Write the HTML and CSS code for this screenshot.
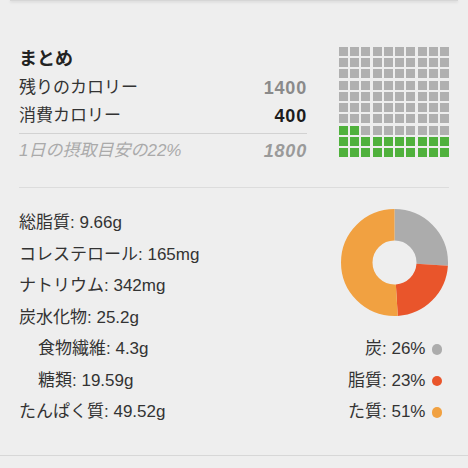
FILE: index.html
```html
<!DOCTYPE html>
<html lang="ja">
<head>
    <meta charset="UTF-8">
    <meta name="viewport" content="width=device-width, initial-scale=1.0">
    <title>まとめ</title>
    <link rel="stylesheet" href="styles.css">
</head>
<body>
    <div class="card-edge"></div>

    <main class="panel">
        <section class="summary">
            <div class="summary-list">
                <h2 class="summary-title">まとめ</h2>
                <div class="summary-row">
                    <span>残りのカロリー</span>
                    <span class="value value-muted">1400</span>
                </div>
                <div class="summary-row summary-row-split">
                    <span>消費カロリー</span>
                    <span class="value value-strong">400</span>
                </div>
                <div class="summary-row summary-row-note">
                    <span>1日の摂取目安の22%</span>
                    <span class="value">1800</span>
                </div>
            </div>
            <div class="waffle" id="waffle"></div>
        </section>

        <section class="nutrients">
            <ul class="nutrient-list">
                <li>総脂質: 9.66g</li>
                <li>コレステロール: 165mg</li>
                <li>ナトリウム: 342mg</li>
                <li>炭水化物: 25.2g</li>
                <li class="sub">食物繊維: 4.3g</li>
                <li class="sub">糖類: 19.59g</li>
                <li>たんぱく質: 49.52g</li>
            </ul>

            <div class="macros">
                <svg class="donut" width="107" height="107" viewBox="0 0 107 107">
                    <g transform="rotate(-90 53.5 53.5)" fill="none" stroke-width="31.5">
                        <circle cx="53.5" cy="53.5" r="37.75" pathLength="100" stroke="#acacac" stroke-dasharray="26 74" stroke-dashoffset="0"/>
                        <circle cx="53.5" cy="53.5" r="37.75" pathLength="100" stroke="#e9552b" stroke-dasharray="23 77" stroke-dashoffset="-26"/>
                        <circle cx="53.5" cy="53.5" r="37.75" pathLength="100" stroke="#f1a141" stroke-dasharray="51 49" stroke-dashoffset="-49"/>
                    </g>
                </svg>
                <ul class="legend">
                    <li>炭: 26%<span class="dot dot-carb"></span></li>
                    <li>脂質: 23%<span class="dot dot-fat"></span></li>
                    <li>た質: 51%<span class="dot dot-protein"></span></li>
                </ul>
            </div>
        </section>
    </main>

    <script>
        // 10x10 のマス目、下から左→右へ 22 マスを塗る
        const filled = 22;
        const waffle = document.getElementById('waffle');
        for (let r = 0; r < 10; r++) {
            for (let c = 0; c < 10; c++) {
                const cell = document.createElement('i');
                if ((9 - r) * 10 + c < filled) {
                    cell.className = 'on';
                }
                waffle.appendChild(cell);
            }
        }
    </script>
</body>
</html>
```

FILE: styles.css
```css
/* 全体 */
body {
    margin: 0;
    background-color: #eeeeee;
    color: #333;
    font-family: "Liberation Sans", "Noto Sans CJK JP", sans-serif;
    font-size: 17px;
}

/* 上のカードの下端 */
.card-edge {
    height: 1px;
    margin: 0 10px;
    background-color: #d6d6d6;
    box-shadow: 0 1px 3px rgba(0, 0, 0, 0.18);
}

.panel {
    margin-top: 43px;
    border-bottom: 1px solid #d7d7d7;
}

/* まとめ */
.summary {
    display: flex;
    justify-content: space-between;
    margin: 0 19px;
    padding-bottom: 22px;
    border-bottom: 1px solid #dcdcdc;
}

.summary-list {
    flex: 0 0 288px;
}

.summary-title {
    margin: 0;
    font-size: 18px;
    font-weight: bold;
    line-height: 30px;
    color: #222;
}

.summary-row {
    display: flex;
    justify-content: space-between;
    line-height: 28px;
}

.summary-row-split {
    padding-bottom: 3px;
    border-bottom: 1px solid #d2d2d2;
}

.summary-row-note {
    padding-top: 3px;
    font-style: italic;
    color: #aaa;
}

.value {
    font-size: 18px;
    font-weight: 600;
    letter-spacing: 0.8px;
}

.value-muted {
    color: #8a8a8a;
}

.value-strong {
    color: #1c1c1c;
    font-weight: bold;
}

.summary-row-note .value {
    color: #9a9a9a;
}

.waffle {
    display: grid;
    grid-template-columns: repeat(10, 1fr);
    gap: 2.2px;
    width: 110px;
    height: 110px;
    margin-top: 3px;
}

.waffle i {
    background-color: #b0b0b0;
}

.waffle i.on {
    background-color: #4fb13c;
}

/* 栄養素 */
.nutrients {
    display: flex;
    justify-content: space-between;
    padding: 19px 20px 27px 19px;
}

.nutrient-list,
.legend {
    list-style: none;
    margin: 0;
    padding: 0;
}

.nutrient-list li,
.legend li {
    line-height: 31.5px;
}

.nutrient-list .sub {
    padding-left: 19px;
}

.macros {
    display: flex;
    flex-direction: column;
    align-items: flex-end;
}

.donut {
    display: block;
    margin-top: 2px;
}

.legend {
    margin-top: 17px;
    padding-right: 6px;
    text-align: right;
}

.dot {
    display: inline-block;
    width: 10.5px;
    height: 10.5px;
    margin-left: 6px;
    border-radius: 50%;
    vertical-align: -0.5px;
}

.dot-carb {
    background-color: #acacac;
}

.dot-fat {
    background-color: #e9552b;
}

.dot-protein {
    background-color: #f1a141;
}
```
